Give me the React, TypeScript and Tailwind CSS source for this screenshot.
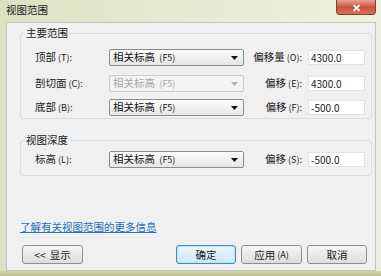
import React from "react";

const FONT = { fontFamily: '"Noto Sans CJK SC", "Liberation Sans", sans-serif' };

function Arrow({ disabled }: { disabled?: boolean }) {
  return (
    <svg width="7" height="4" viewBox="0 0 7 4" className="mr-[5px]">
      <path d="M0 0 H7 L3.5 4 Z" fill={disabled ? "#b4b4b4" : "#111"} />
    </svg>
  );
}

function Combo({ disabled }: { disabled?: boolean }) {
  return (
    <div
      className={
        "w-[135px] h-[17px] flex items-center justify-between rounded-[2px] border " +
        (disabled
          ? "border-[#c8cccf] bg-[#f4f4f4] text-[#a6a6a6]"
          : "border-[#8a8a8a] bg-gradient-to-b from-[#fbfbfb] to-[#e6e6e6] text-[#111]")
      }
    >
      <span className="pl-[3px] text-[10.5px] leading-[12px]">
        相关标高 <span className="text-[9px] pl-[2px]">(F5)</span>
      </span>
      <Arrow disabled={disabled} />
    </div>
  );
}

// label text: CJK part at normal size, key hint smaller
function Label({ cjk, hint }: { cjk: string; hint: string }) {
  return (
    <>
      {cjk}
      <span className="text-[9px] pl-[2px]">{hint}</span>
    </>
  );
}

function Row({
  label,
  right,
  value,
  disabled,
  className,
}: {
  label: [string, string];
  right: [string, string];
  value: string;
  disabled?: boolean;
  className?: string;
}) {
  return (
    <div className={"flex items-center pl-[14px] " + (className ?? "")}>
      <div className="w-[74px] text-[10.5px] leading-[12px] text-[#1a1a1a]">
        <Label cjk={label[0]} hint={label[1]} />
      </div>
      <Combo disabled={disabled} />
      <div className="w-[64px] pr-[6px] text-right text-[10.5px] leading-[12px] text-[#1a1a1a]">
        <Label cjk={right[0]} hint={right[1]} />
      </div>
      <div className="w-[57px] h-[15px] flex items-center bg-white border border-[#e2e3e6] pl-[2px] text-[10px] leading-[12px] text-[#1a1a1a]">
        {value}
      </div>
    </div>
  );
}

function Btn({ children, w, primary }: { children: React.ReactNode; w: string; primary?: boolean }) {
  return (
    <div
      className={
        w +
        " h-[19px] flex items-center justify-center rounded-[3px] border text-[10.5px] leading-[12px] text-[#1a1a1a] " +
        (primary
          ? "border-[#3c8fc4] bg-gradient-to-b from-[#eaf6fd] to-[#cfe8f7] shadow-[inset_0_0_0_1px_#bfe2f7]"
          : "border-[#8e8f8f] bg-gradient-to-b from-[#f6f6f6] to-[#dddddd]")
      }
    >
      {children}
    </div>
  );
}

export default function App() {
  return (
    <div className="w-[381px] h-[276px] flex flex-col bg-gradient-to-r from-[#dbe1c3] via-[#e7ebd4] to-[#eef0df]" style={FONT}>
      {/* title bar */}
      <div className="h-[22px] flex items-start justify-between">
        <span className="pl-[6px] pt-[4px] text-[10.5px] leading-[12px] text-[#1c1c1c]">视图范围</span>
        <div className="mr-[5px] w-[40px] h-[15px] flex items-center justify-center rounded-b-[4px] border border-t-0 border-[#8b3a2c] bg-gradient-to-b from-[#e9a493] via-[#c9513c] to-[#d4725a] text-white text-[11px] font-bold leading-none">
          ✕
        </div>
      </div>

      {/* client area */}
      <div className="ml-[6px] mr-[5px] h-[249px] bg-[#f0f0f0] border border-[#c3c8b6] flex flex-col">
        <fieldset className="ml-[13px] mt-[4px] w-[352px] h-[92px] border border-[#d5dfe5] rounded-[3px]">
          <legend className="ml-[4px] px-[1px] text-[10.5px] leading-[12px] text-[#1a1a1a]">主要范围</legend>
          <Row className="mt-[10px]" label={["顶部", "(T):"]} right={["偏移量", "(O):"]} value="4300.0" />
          <Row className="mt-[9px]" label={["剖切面", "(C):"]} right={["偏移", "(E):"]} value="4300.0" disabled />
          <Row className="mt-[7px]" label={["底部", "(B):"]} right={["偏移", "(F):"]} value="-500.0" />
        </fieldset>

        <fieldset className="ml-[13px] mt-[15px] w-[352px] h-[42px] border border-[#d5dfe5] rounded-[3px]">
          <legend className="ml-[4px] px-[1px] text-[10.5px] leading-[12px] text-[#1a1a1a]">视图深度</legend>
          <Row className="mt-[5px]" label={["标高", "(L):"]} right={["偏移", "(S):"]} value="-500.0" />
        </fieldset>

        <a className="ml-[13px] mt-[45px] w-fit text-[10.5px] leading-[12px] text-[#1f6fba] underline">
          了解有关视图范围的更多信息
        </a>

        <div className="mt-[12px] flex items-center pl-[15px] pr-[8px]">
          <Btn w="w-[61px]">
            <span className="pr-[4px]">&lt;&lt;</span>显示
          </Btn>
          <div className="flex-1" />
          <div className="flex gap-[5px]">
            <Btn w="w-[60px]" primary>确定</Btn>
            <Btn w="w-[61px]">
              应用 <span className="text-[9px] pl-[2px]">(A)</span>
            </Btn>
            <Btn w="w-[60px]">取消</Btn>
          </div>
        </div>
      </div>

      <div className="flex-1 bg-gradient-to-b from-[#cdd3ad] to-[#bcc391]" />
    </div>
  );
}
